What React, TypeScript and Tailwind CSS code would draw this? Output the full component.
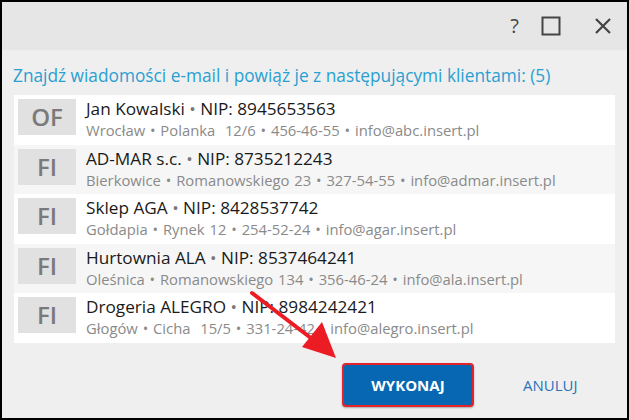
const clients = [
  { tag: "OF", name: "Jan Kowalski", nip: "8945653563", sub: "Wrocław • Polanka\u00a0 12/6 • 456-46-55 • info@abc.insert.pl" },
  { tag: "FI", name: "AD-MAR s.c.", nip: "8735212243", sub: "Bierkowice • Romanowskiego 23 • 327-54-55 • info@admar.insert.pl" },
  { tag: "FI", name: "Sklep AGA", nip: "8428537742", sub: "Gołdapia • Rynek 12 • 254-52-24 • info@agar.insert.pl" },
  { tag: "FI", name: "Hurtownia ALA", nip: "8537464241", sub: "Oleśnica • Romanowskiego 134 • 356-46-24 • info@ala.insert.pl" },
  { tag: "FI", name: "Drogeria ALEGRO", nip: "8984242421", sub: "Głogów • Cicha\u00a0 15/5 • 331-24-42 • info@alegro.insert.pl" },
];

function ClientRow({ c, odd }: { c: (typeof clients)[number]; odd: boolean }) {
  return (
    <div className={`flex h-[49.6px] items-start gap-[10px] px-[4px] pt-[4px] ${odd ? "bg-[#f6f6f6]" : "bg-white"}`}>
      <div className="flex h-[36px] w-[58px] shrink-0 items-center justify-center bg-[#e1e1e1] text-[24px] font-semibold leading-none text-[#7a7a7a]">
        {c.tag}
      </div>
      <div className="-mt-[1px] flex flex-col">
        <div className="text-[17.2px] leading-[22px] text-[#1a1a1a]">
          {c.name} <span className="text-[#777]">•</span> NIP: {c.nip}
        </div>
        <div className="text-[14.8px] leading-[21px] text-[#8a8a8a] [word-spacing:1px]">{c.sub}</div>
      </div>
    </div>
  );
}

export default function App() {
  return (
    <div
      className="relative flex h-[420px] w-[629px] flex-col overflow-hidden border-2 border-black bg-[#efefef]"
      style={{ fontFamily: '"Open Sans", "Noto Sans", sans-serif' }}
    >
      <div className="flex h-[48px] shrink-0 items-center justify-end bg-[#e6e6e6] pr-[14px] text-[#444]">
        <span className="text-[20px] leading-none">?</span>
        <svg className="ml-[22px]" width="20" height="20" viewBox="0 0 20 20">
          <rect x="1.5" y="1.5" width="17" height="17" fill="none" stroke="#444" strokeWidth="2" />
        </svg>
        <svg className="ml-[32px]" width="20" height="20" viewBox="0 0 20 20">
          <path d="M3 3 L17 17 M17 3 L3 17" stroke="#444" strokeWidth="2.2" />
        </svg>
      </div>

      <div className="flex flex-1 flex-col px-[12px]">
        <div className="mt-[15px] -ml-[1px] text-[17.3px] leading-[22px] text-[#2a9fd2]">
          Znajdź wiadomości e-mail i powiąż je z następującymi klientami: (5)
        </div>
        <div className="mt-[8px] flex w-[601px] flex-col bg-white">
          {clients.map((c, i) => (
            <ClientRow key={c.name} c={c} odd={i % 2 === 1} />
          ))}
        </div>

        <div className="mt-[20px] flex items-center">
          <button className="ml-[328px] flex h-[44px] w-[132px] items-center justify-center rounded-[4px] border-2 border-[#e2242a] bg-[#0767b2] text-[15px] font-bold text-white shadow-[0_1px_2px_rgba(0,0,0,0.3)]">
            WYKONAJ
          </button>
          <span className="ml-[49px] text-[15px] text-[#2b72b8]">ANULUJ</span>
        </div>
      </div>

      <svg className="pointer-events-none absolute left-0 top-0" width="629" height="420">
        <line x1="250" y1="291" x2="318" y2="343" stroke="#ec1c24" strokeWidth="4" strokeLinecap="round" />
        <polygon points="334,356 300,345 320,320" fill="#ec1c24" />
      </svg>
    </div>
  );
}
